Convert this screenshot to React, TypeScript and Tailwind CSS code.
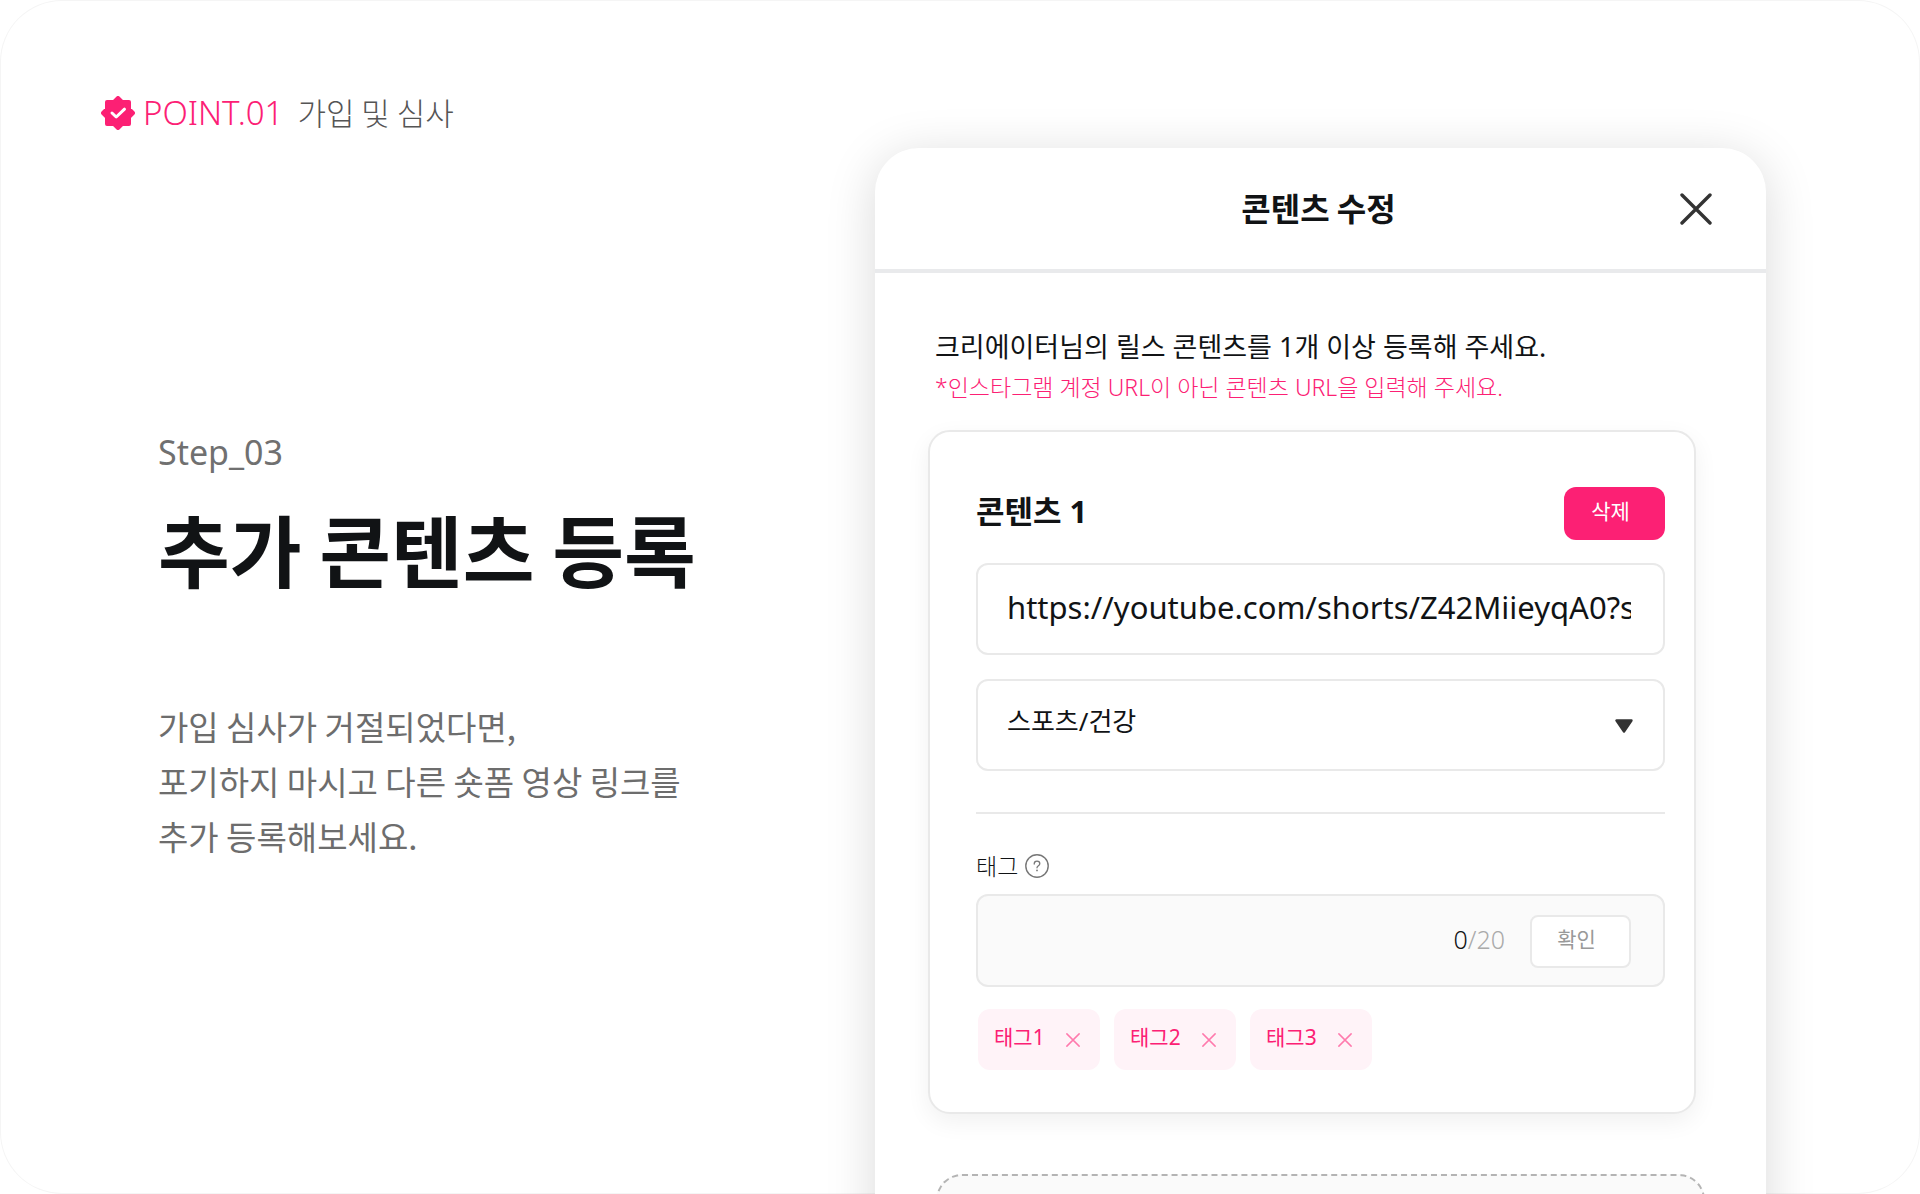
import { useState } from "react";

const field =
  "w-full h-[92px] rounded-xl border-2 border-[#e9e9e9] pl-[29px] pr-8 text-[#111315] outline-none";

function VerifiedIcon() {
  return (
    <svg viewBox="0 0 34 34" className="size-[34px]" aria-hidden="true">
      <path
        d="M17 2 L21 6 H28 V13 L32 17 L28 21 V28 H21 L17 32 L13 28 H6 V21 L2 17 L6 13 V6 H13 Z"
        fill="#fc2074"
        stroke="#fc2074"
        strokeWidth="4"
        strokeLinejoin="round"
      />
      <path
        d="M11 17 L15.2 21 L23.5 13.2"
        fill="none"
        stroke="#fff"
        strokeWidth="3"
        strokeLinecap="round"
        strokeLinejoin="round"
      />
    </svg>
  );
}

function CrossIcon({ className }: { className: string }) {
  return (
    <svg viewBox="0 0 32 32" className={className} aria-hidden="true">
      <path
        d="M2 2 L30 30 M30 2 L2 30"
        fill="none"
        stroke="currentColor"
        strokeWidth="3.4"
        strokeLinecap="round"
      />
    </svg>
  );
}

function HelpIcon() {
  return (
    <svg viewBox="0 0 24 24" className="size-6" fill="none" aria-hidden="true">
      <circle cx="12" cy="12" r="11.2" stroke="#777" strokeWidth="1.4" />
      <path
        d="M9.2 10 C9.2 8.2 10.4 7.2 12 7.2 C13.6 7.2 14.8 8.2 14.8 9.7 C14.8 11.6 12 11.8 12 13.8"
        stroke="#777"
        strokeWidth="1.3"
        strokeLinecap="round"
      />
      <circle cx="12" cy="16.4" r="0.9" fill="#777" />
    </svg>
  );
}

function Intro() {
  return (
    <section className="pt-[89px] pl-[101px]">
      <div className="flex items-center leading-[48px] font-light">
        <VerifiedIcon />
        <span className="ml-2 text-[33px] text-[#fc2074]">POINT.01</span>
        <span className="ml-[14px] pb-0.5 font-['Noto_Sans_CJK_KR',sans-serif] text-[31px] leading-[46px] text-[#555]">
          가입 및 심사
        </span>
      </div>

      <div className="mt-[290px] pl-[57px]">
        <p className="text-[34px] leading-[50px] text-[#707070]">Step_03</p>
        <h1 className="mt-4 font-['Noto_Sans_CJK_KR',sans-serif] text-[78px] leading-[110px] font-bold whitespace-nowrap text-[#111315]">
          추가 콘텐츠 등록
        </h1>
        <p className="mt-24 font-['Noto_Sans_CJK_KR',sans-serif] text-[33px] leading-[55px] whitespace-nowrap text-[#6d6d6d]">
          가입 심사가 거절되었다면,
          <br />
          포기하지 마시고 다른 숏폼 영상 링크를
          <br />
          추가 등록해보세요.
        </p>
      </div>
    </section>
  );
}

function Tag({ name, onRemove }: { name: string; onRemove: () => void }) {
  return (
    <li className="flex h-[61px] w-[122px] items-center justify-between rounded-xl bg-[#fff3f8] pr-5 pl-4 text-[21px] text-[#fc2074]">
      <span className="pb-1">{name}</span>
      <button type="button" onClick={onRemove} aria-label={`${name} 삭제`}>
        <CrossIcon className="size-[14px] text-[#ff7aad]" />
      </button>
    </li>
  );
}

function ContentCard() {
  const [tags, setTags] = useState(["태그1", "태그2", "태그3"]);
  const [tag, setTag] = useState("");

  return (
    <div className="rounded-[22px] border-2 border-[#e9e9e9] bg-white pt-[55px] pr-[29px] pb-[42px] pl-[46px] shadow-[0_8px_24px_rgba(0,0,0,0.06)]">
      <div className="flex items-center justify-between">
        <h3 className="pb-1 text-[31px] leading-[49px] font-bold">콘텐츠 1</h3>
        <button
          type="button"
          className="h-[53px] w-[101px] rounded-xl bg-[#fc2074] pr-2 pb-1 text-[21px] text-white"
        >
          삭제
        </button>
      </div>

      <input
        type="text"
        aria-label="콘텐츠 URL"
        defaultValue="https://youtube.com/shorts/Z42MiieyqA0?si=share"
        className={`${field} mt-[23px] pb-1 text-[31px]`}
      />

      <div className="relative mt-6">
        <select
          aria-label="카테고리"
          className={`${field} block appearance-none bg-white pb-2 text-[26px]`}
        >
          <option>스포츠/건강</option>
        </select>
        <svg
          viewBox="0 0 18 14"
          className="pointer-events-none absolute top-10 right-8 h-[14px] w-[18px]"
          aria-hidden="true"
        >
          <path
            d="M1.5 1.5 H16.5 L9 12.5 Z"
            fill="#333"
            stroke="#333"
            strokeWidth="2.4"
            strokeLinejoin="round"
          />
        </svg>
      </div>

      <hr className="mt-[41px] border-t-2 border-[#e9e9e9]" />

      <div className="mt-9 flex items-center gap-[7px]">
        <label htmlFor="tag" className="text-[23px] leading-8 font-light">
          태그
        </label>
        <HelpIcon />
      </div>

      <div className="mt-3 flex h-[93px] items-center rounded-xl border-2 border-[#e9e9e9] bg-[#fafafa] pt-0.5 pr-8 pl-[30px]">
        <input
          id="tag"
          type="text"
          maxLength={20}
          value={tag}
          onChange={(e) => setTag(e.target.value)}
          className="min-w-0 flex-1 text-[25px] outline-none"
        />
        <span className="pb-1 text-[25px] font-light text-[#aaa]">
          <span className="text-[#111315]">{tag.length}</span>/20
        </span>
        <button
          type="button"
          onClick={() => {
            if (tag) setTags([...tags, tag]);
            setTag("");
          }}
          className="ml-[25px] h-[53px] w-[101px] rounded-lg border-2 border-[#e9e9e9] bg-white pr-2 pb-1 text-[21px] text-[#999]"
        >
          확인
        </button>
      </div>

      <ul className="mt-[22px] flex gap-[14px] pl-0.5">
        {tags.map((name) => (
          <Tag
            key={name}
            name={name}
            onRemove={() => setTags(tags.filter((t) => t !== name))}
          />
        ))}
      </ul>
    </div>
  );
}

function EditPanel() {
  return (
    <section className="mt-[148px] rounded-t-[44px] bg-white text-[#111315] shadow-[0_8px_50px_rgba(0,0,0,0.15)]">
      <header className="grid grid-cols-[1fr_auto_1fr] items-center border-b-4 border-[#e9eaec] px-[54px] pt-9 pb-[35px]">
        <h2 className="col-start-2 pr-1 pb-1 font-['Noto_Sans_CJK_KR',sans-serif] text-[32px] leading-[46px] font-bold">
          콘텐츠 수정
        </h2>
        <button type="button" aria-label="닫기" className="justify-self-end">
          <CrossIcon className="size-8 text-[#333]" />
        </button>
      </header>

      <div className="pt-[54px] pr-[70px] pl-[53px]">
        <div className="pl-[7px] whitespace-nowrap">
          <p className="text-[27px] leading-10">
            크리에이터님의 릴스 콘텐츠를 1개 이상 등록해 주세요.
          </p>
          <p className="text-[23px] leading-10 font-light text-[#fc2074]">
            *인스타그램 계정 URL이 아닌 콘텐츠 URL을 입력해 주세요.
          </p>
        </div>
        <div className="mt-[23px]">
          <ContentCard />
        </div>
      </div>

      <div className="mx-[61px] mt-[60px] h-[200px] rounded-[26px] border-2 border-dashed border-[#b4b4b4] bg-[#fafafa]" />
    </section>
  );
}

export default function App() {
  return (
    <main className="h-screen overflow-hidden rounded-[62px] bg-white font-['Noto_Sans','Noto_Sans_CJK_KR',sans-serif] ring-1 ring-[#f5f5f5] ring-inset">
      <div className="grid h-full grid-cols-[875fr_891fr_154fr]">
        <Intro />
        <EditPanel />
      </div>
    </main>
  );
}
